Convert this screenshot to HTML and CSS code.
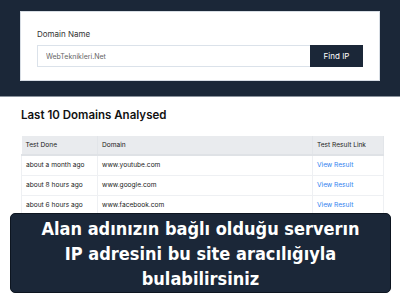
FILE: index.html
```html
<!DOCTYPE html>
<html lang="tr">
<head>
  <meta charset="UTF-8">
  <meta name="viewport" content="width=device-width, initial-scale=1.0">
  <title>Find IP</title>
  <link rel="stylesheet" href="styles.css">
</head>
<body>
  <div class="hero">
    <div class="search-card">
      <label class="search-label" for="domain">Domain Name</label>
      <div class="search-row">
        <input id="domain" class="search-input" type="text" placeholder="WebTeknikleri.Net">
        <button class="search-btn">Find IP</button>
      </div>
    </div>
  </div>
  <div class="recent">
    <h2>Last 10 Domains Analysed</h2>
    <table class="recent-table">
      <thead>
        <tr>
          <th class="col-time">Test Done</th>
          <th>Domain</th>
          <th class="col-link">Test Result Link</th>
        </tr>
      </thead>
      <tbody>
        <tr>
          <td>about a month ago</td>
          <td>www.youtube.com</td>
          <td><a href="#">View Result</a></td>
        </tr>
        <tr>
          <td>about 8 hours ago</td>
          <td>www.google.com</td>
          <td><a href="#">View Result</a></td>
        </tr>
        <tr>
          <td>about 6 hours ago</td>
          <td>www.facebook.com</td>
          <td><a href="#">View Result</a></td>
        </tr>
      </tbody>
    </table>
  </div>
  <div class="caption">
    Alan adınızın bağlı olduğu serverın<br>
    IP adresini bu site aracılığıyla<br>
    bulabilirsiniz
  </div>
</body>
</html>
```

FILE: styles.css
```css
* {
  margin: 0;
  padding: 0;
  box-sizing: border-box;
}
body {
  font-family: Inter, 'Open Sans', sans-serif;
  background: #fff;
  color: #222;
  width: 400px;
  height: 300px;
  overflow: hidden;
  position: relative;
}
.hero {
  background: #1b2738;
  padding: 11px 20px 15px;
  border-bottom: 1px solid #8a929c;
}
.search-card {
  background: #fff;
  height: 70px;
  padding: 17px 16px 0;
  border: 1px solid #d7dde4;
}
.search-label {
  display: block;
  font-size: 8px;
  color: #333;
  margin-bottom: 6px;
}
.search-row {
  display: flex;
  height: 22px;
}
.search-input {
  flex: 1;
  border: 1px solid #dbe2ea;
  border-right: none;
  padding: 0 8px;
  font-family: inherit;
  font-size: 7px;
  color: #555;
}
.search-input::placeholder {
  color: #666;
}
.search-btn {
  width: 53px;
  background: #1b2738;
  color: #fff;
  border: none;
  font-family: inherit;
  font-size: 8px;
}
.recent {
  padding: 11px 16px 0 21px;
}
.recent h2 {
  font-size: 11.5px;
  font-weight: 600;
  color: #111;
  margin-bottom: 14px;
}
.recent-table {
  width: 363px;
  border-collapse: collapse;
  font-size: 6.6px;
  color: #222;
}
.recent-table th {
  background: #e9ebee;
  font-weight: 400;
  text-align: left;
  height: 19px;
  padding: 0 4px;
  border-bottom: 2px solid #dfe2e6;
  border-right: 1px solid #e2e5e9;
}
.recent-table td {
  height: 20px;
  padding: 0 4px;
  border-bottom: 1px solid #eef0f3;
  border-right: 1px solid #eef0f3;
  border-left: 1px solid #eef0f3;
}
.recent-table .col-time {
  width: 76px;
}
.recent-table .col-link {
  width: 71px;
}
.recent-table a {
  color: #2f7fef;
  text-decoration: none;
}
.caption {
  position: absolute;
  left: 10px;
  top: 213px;
  width: 381px;
  height: 80px;
  background: #1b2738;
  border: 1px solid #0d1520;
  border-radius: 5px;
  color: #fff;
  font-family: 'DejaVu Sans Condensed', 'DejaVu Sans', sans-serif;
  font-weight: 700;
  font-size: 18px;
  line-height: 25px;
  text-align: center;
  padding-top: 2px;
}
```
